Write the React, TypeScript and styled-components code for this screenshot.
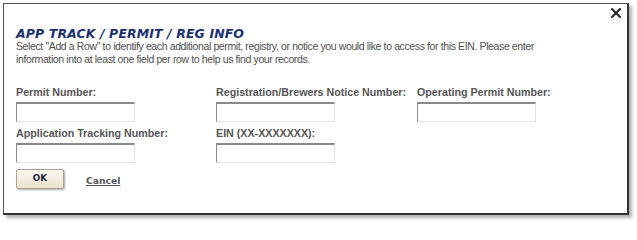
import React from "react";
import styled, { createGlobalStyle } from "styled-components";

const Global = createGlobalStyle`
  html, body { margin: 0; padding: 0; background: #ffffff; }
  body { font-family: "Liberation Sans", Arial, sans-serif; }
`;

const Page = styled.div`
  padding: 3px 0 0 3px;
  width: 637px;
  height: 223px;
  box-sizing: border-box;
`;

const Dialog = styled.div`
  position: relative;
  box-sizing: border-box;
  width: 626px;
  height: 212px;
  background: #ffffff;
  border-style: solid;
  border-color: #555 #333 #333 #555;
  border-width: 1px 2px 2px 1px;
  box-shadow: 3px 3px 3px rgba(0, 0, 0, 0.3);
  padding: 22px 12px 0 12px;
`;

const Close = styled.button`
  position: absolute;
  top: 2px;
  right: 4px;
  width: 14px;
  height: 14px;
  padding: 0;
  border: 0;
  background: transparent;
  display: flex;
  align-items: center;
  justify-content: center;
  cursor: pointer;
`;

const Title = styled.h2`
  margin: 0;
  font-family: "DejaVu Sans", Verdana, sans-serif;
  font-size: 12.5px;
  font-weight: bold;
  font-style: italic;
  color: #1a3170;
  line-height: 16px;
  letter-spacing: 0.1px;
`;

const Intro = styled.p`
  margin: -2px 0 0 0;
  width: 540px;
  font-size: 10.5px;
  letter-spacing: -0.38px;
  line-height: 13px;
  color: #4f4f4f;
`;

const Fields = styled.div`
  display: grid;
  grid-template-columns: 200px 201px 200px;
  row-gap: 4px;
  margin-top: 19px;
`;

const Field = styled.div`
  display: flex;
  flex-direction: column;
`;

const Label = styled.label`
  font-size: 10.7px;
  font-weight: bold;
  color: #555;
  line-height: 14px;
  height: 14px;
  margin-bottom: 3px;
  white-space: nowrap;
`;

const Input = styled.input`
  box-sizing: border-box;
  width: 119px;
  height: 20px;
  margin: 0;
  padding: 0 3px;
  background: #fff;
  border-style: solid;
  border-width: 2px 1px 1px 1px;
  border-color: #8a8a8a #e6e6e6 #e6e6e6 #8a8a8a;
  font-size: 12px;
  outline: none;
`;

const Actions = styled.div`
  display: flex;
  align-items: center;
  gap: 22px;
  margin-top: 6px;
`;

const OkButton = styled.button`
  box-sizing: border-box;
  width: 48px;
  height: 20px;
  padding: 0 0 3px 0;
  border: 1px solid #a9a398;
  border-radius: 2px;
  background: linear-gradient(#faf8ef, #e9e3cf);
  box-shadow: 1px 1px 2px rgba(0, 0, 0, 0.35);
  font-family: "DejaVu Sans", Verdana, sans-serif;
  font-size: 8.8px;
  font-weight: bold;
  color: #1c2238;
  cursor: pointer;
`;

const CancelLink = styled.a`
  font-family: "DejaVu Sans", Verdana, sans-serif;
  font-size: 9.2px;
  font-weight: bold;
  color: #555;
  text-decoration: underline;
  cursor: pointer;
  margin-top: 3px;
`;

const fields = [
  "Permit Number:",
  "Registration/Brewers Notice Number:",
  "Operating Permit Number:",
  "Application Tracking Number:",
  "EIN (XX-XXXXXXX):",
];

export default function App() {
  return (
    <Page>
      <Global />
      <Dialog>
        <Close aria-label="Close">
          <svg width="10" height="10" viewBox="0 0 10 10">
            <path d="M1.2 1.2 L8.8 8.8 M8.8 1.2 L1.2 8.8" stroke="#2b2b2b" strokeWidth="2.2" strokeLinecap="square" />
          </svg>
        </Close>
        <Title>APP TRACK / PERMIT / REG INFO</Title>
        <Intro>
          Select "Add a Row" to identify each additional permit, registry, or notice you would like to access for this EIN. Please enter information into at least one field per row to help us find your records.
        </Intro>
        <Fields>
          {fields.map((f) => (
            <Field key={f}>
              <Label>{f}</Label>
              <Input type="text" />
            </Field>
          ))}
        </Fields>
        <Actions>
          <OkButton>OK</OkButton>
          <CancelLink>Cancel</CancelLink>
        </Actions>
      </Dialog>
    </Page>
  );
}
